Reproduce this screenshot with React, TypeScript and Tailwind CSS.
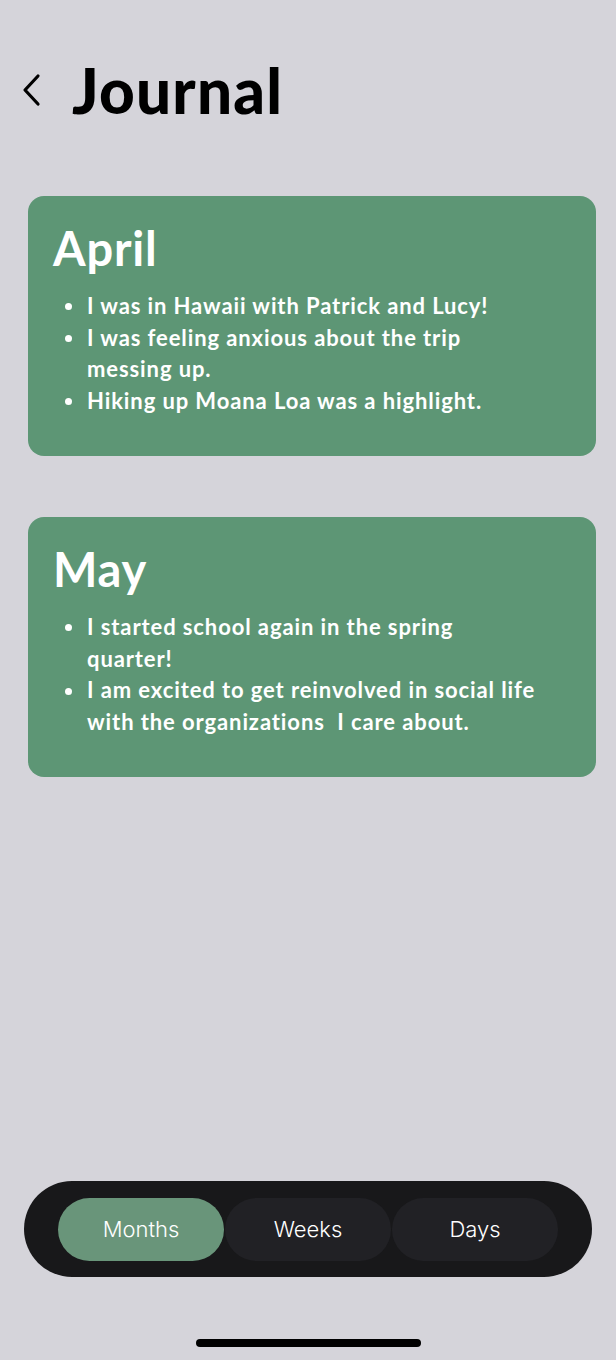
import React from "react";

type Entry = {
  month: string;
  items: React.ReactNode[];
};

const entries: Entry[] = [
  {
    month: "April",
    items: [
      "I was in Hawaii with Patrick and Lucy!",
      <>
        I was feeling anxious about the trip
        <br />
        messing up.
      </>,
      "Hiking up Moana Loa was a highlight.",
    ],
  },
  {
    month: "May",
    items: [
      <>
        I started school again in the spring
        <br />
        quarter!
      </>,
      <>
        I am excited to get reinvolved in social life
        <br />
        with the organizations&nbsp; I care about.
      </>,
    ],
  },
];

const tabs = ["Months", "Weeks", "Days"];

const JournalCard: React.FC<{ entry: Entry }> = ({ entry }) => (
  <div className="bg-[#5d9675] rounded-[16px] h-[260px] pl-[25px] pt-[24px] text-white">
    <h2 className="text-[47px] leading-[56px] font-bold tracking-[0.8px]">
      {entry.month}
    </h2>
    <ul className="mt-[14px] text-[22px] leading-[31.7px] font-bold tracking-[0.9px]">
      {entry.items.map((item, i) => (
        <li key={i} className="flex">
          <span className="w-[34px] shrink-0 h-[31.7px] flex items-center pl-[12px] pt-[2px]">
            <span className="block w-[7px] h-[7px] rounded-full bg-white" />
          </span>
          <span>{item}</span>
        </li>
      ))}
    </ul>
  </div>
);

export default function App() {
  const active = "Months";

  return (
    <div className="w-[616px] h-[1360px] bg-[#d5d4da] flex flex-col font-['Lato','Noto_Sans',sans-serif]">
      <div className="flex items-center h-[60px] mt-[60px] pl-[20px]">
        <svg width="24" height="34" viewBox="0 0 24 34" className="text-black">
          <path
            d="M18 3 L5 17 L18 31"
            fill="none"
            stroke="currentColor"
            strokeWidth="3.2"
            strokeLinecap="round"
            strokeLinejoin="round"
          />
        </svg>
        <h1 className="ml-[28px] text-[62px] font-black leading-none tracking-[1.2px] text-black">
          Journal
        </h1>
      </div>

      <div className="mt-[76px] px-[28px] pr-[20px] flex flex-col gap-[61px]">
        {entries.map((e) => (
          <JournalCard key={e.month} entry={e} />
        ))}
      </div>

      <div className="flex-1" />

      <div className="mx-[24px] h-[96px] rounded-full bg-[#18181a] flex items-center px-[34px] gap-[1px]">
        {tabs.map((t) => (
          <button
            key={t}
            className={
              "flex-1 h-[63px] rounded-full text-[22px] text-white font-['Inter','Roboto',sans-serif] font-light " +
              (t === active ? "bg-[#69957a]" : "bg-[#212125]")
            }
          >
            {t}
          </button>
        ))}
      </div>

      <div className="h-[83px] flex justify-center pt-[62px]">
        <div className="w-[225px] h-[8px] rounded-full bg-black" />
      </div>
    </div>
  );
}
